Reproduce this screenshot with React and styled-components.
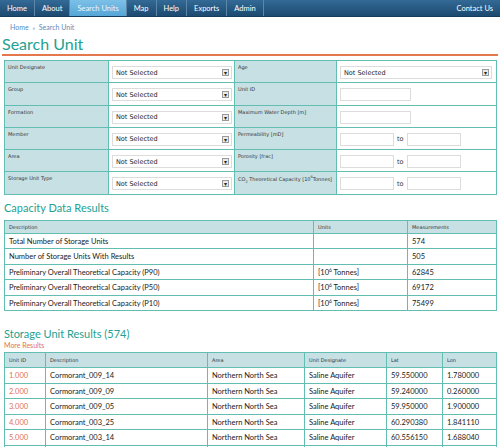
import React from 'react';
import styled, { createGlobalStyle } from 'styled-components';

const GlobalStyle = createGlobalStyle`
  body {
    margin: 0;
    background: #fff;
    font-family: Lato, "Open Sans", sans-serif;
  }
`;

const navItems = ['Home', 'About', 'Search Units', 'Map', 'Help', 'Exports', 'Admin'];

const leftFields = ['Unit Designate', 'Group', 'Formation', 'Member', 'Area', 'Storage Unit Type'];

const capacity = [
  ['Total Number of Storage Units', '', '574'],
  ['Number of Storage Units With Results', '', '505'],
  ['Preliminary Overall Theoretical Capacity (P90)', 't', '62845'],
  ['Preliminary Overall Theoretical Capacity (P50)', 't', '69172'],
  ['Preliminary Overall Theoretical Capacity (P10)', 't', '75499'],
];

const units = [
  ['1.000', 'Cormorant_009_14', '59.550000', '1.780000'],
  ['2.000', 'Cormorant_009_09', '59.240000', '0.260000'],
  ['3.000', 'Cormorant_009_05', '59.950000', '1.900000'],
  ['4.000', 'Cormorant_003_25', '60.290380', '1.841110'],
  ['5.000', 'Cormorant_003_14', '60.556150', '1.688040'],
  ['6.000', 'Cormorant_003_13', '60.412000', '1.622000'],
];

export default function App() {
  return (
    <>
      <GlobalStyle />
      <Nav>
        {navItems.map(item => (
          <NavItem key={item} active={item === 'Search Units'}>{item}</NavItem>
        ))}
        <NavRight>Contact Us</NavRight>
      </Nav>
      <Page>
        <Crumbs>Home <span>»</span> Search Unit</Crumbs>
        <Title>Search Unit</Title>
        <Rule />
        <FormTable>
          <colgroup>
            <col style={{ width: 104 }} />
            <col style={{ width: 126 }} />
            <col style={{ width: 102 }} />
            <col />
          </colgroup>
          <tbody>
            {leftFields.map((label, i) => (
              <tr key={label}>
                <LabelCell>{label}</LabelCell>
                <ValueCell>
                  <Select><span>Not Selected</span><Arrow>▾</Arrow></Select>
                </ValueCell>
                <LabelCell>{rightLabel(i)}</LabelCell>
                <ValueCell>{rightValue(i)}</ValueCell>
              </tr>
            ))}
          </tbody>
        </FormTable>

        <Heading>Capacity Data Results</Heading>
        <DataTable>
          <colgroup>
            <col style={{ width: 309 }} />
            <col style={{ width: 94 }} />
            <col />
          </colgroup>
          <thead>
            <tr>
              <Th>Description</Th>
              <Th>Units</Th>
              <Th>Measurements</Th>
            </tr>
          </thead>
          <tbody>
            {capacity.map(([d, u, m]) => (
              <tr key={d}>
                <Td>{d}</Td>
                <Td>{u && <>[10<sup>6</sup> Tonnes]</>}</Td>
                <Td>{m}</Td>
              </tr>
            ))}
          </tbody>
        </DataTable>

        <Heading second>Storage Unit Results (574)</Heading>
        <MoreLink>More Results</MoreLink>
        <DataTable>
          <colgroup>
            <col style={{ width: 41 }} />
            <col style={{ width: 162 }} />
            <col style={{ width: 97 }} />
            <col style={{ width: 82 }} />
            <col style={{ width: 56 }} />
            <col />
          </colgroup>
          <thead>
            <tr>
              <Th tall>Unit ID</Th>
              <Th tall>Description</Th>
              <Th tall>Area</Th>
              <Th tall>Unit Designate</Th>
              <Th tall>Lat</Th>
              <Th tall>Lon</Th>
            </tr>
          </thead>
          <tbody>
            {units.map(([id, d, lat, lon]) => (
              <tr key={id}>
                <Td id>{id}</Td>
                <Td>{d}</Td>
                <Td>Northern North Sea</Td>
                <Td>Saline Aquifer</Td>
                <Td>{lat}</Td>
                <Td>{lon}</Td>
              </tr>
            ))}
          </tbody>
        </DataTable>
      </Page>
    </>
  );
}

function rightLabel(i) {
  switch (i) {
    case 0: return 'Age';
    case 1: return 'Unit ID';
    case 2: return 'Maximum Water Depth [m]';
    case 3: return 'Permeability [mD]';
    case 4: return 'Porosity [frac]';
    default: return <>CO<sub>2</sub> Theoretical Capacity [10<sup>6</sup>Tonnes]</>;
  }
}

function rightValue(i) {
  if (i === 0) return <Select wide><span>Not Selected</span><Arrow>▾</Arrow></Select>;
  if (i < 3) return <Input />;
  return (
    <Range>
      <Input short />
      <span>to</span>
      <Input short />
    </Range>
  );
}

const Nav = styled.div`
  display: flex;
  align-items: stretch;
  height: 16px;
  background: linear-gradient(#336a96, #1c4a70);
  border-bottom: 1px solid #163c5c;
`;

const NavItem = styled.div`
  display: flex;
  align-items: center;
  padding: 0 7px;
  font-size: 7.5px;
  font-weight: 400;
  color: ${p => (p.active ? '#eef7fc' : '#ffffff')};
  background: ${p => (p.active ? 'linear-gradient(#7cc0e8, #55a6d6)' : 'transparent')};
  border-right: 1px solid #5d86a8;
`;

const NavRight = styled.div`
  margin-left: auto;
  display: flex;
  align-items: center;
  padding: 0 7px;
  font-size: 7.5px;
  font-weight: 400;
  color: #fff;
`;

const Page = styled.div`
  padding: 0 3px 0 4px;
`;

const Crumbs = styled.div`
  margin: 6px 0 0 6px;
  font-size: 7px;
  color: #5b8cbc;
  span {
    font-size: 6px;
    margin: 0 2px;
  }
`;

const Title = styled.h1`
  margin: 3px 0 0 -2px;
  font-size: 16px;
  font-weight: 400;
  color: #23a192;
  line-height: 19px;
`;

const Rule = styled.div`
  height: 2px;
  background: #e4774e;
  margin: 1px -1px 4px -2px;
`;

const FormTable = styled.table`
  width: 100%;
  border-collapse: collapse;
  table-layout: fixed;
  border: 1px solid #62bdb3;
`;

const LabelCell = styled.td`
  height: 18.3px;
  padding: 3px 3px 0;
  vertical-align: top;
  background: #c7e0e4;
  border: 1px solid #62bdb3;
  font-family: "DejaVu Sans", sans-serif;
  font-size: 5px;
  color: #333;
  white-space: nowrap;
  overflow: hidden;
  sub, sup { font-size: 3.5px; }
`;

const ValueCell = styled.td`
  padding: 5px 3px 0;
  vertical-align: top;
  border: 1px solid #62bdb3;
  background: #fff;
`;

const Select = styled.div`
  display: flex;
  align-items: center;
  justify-content: space-between;
  height: 13px;
  width: ${p => (p.wide ? '152px' : '120px')};
  box-sizing: border-box;
  padding: 0 2px 0 3px;
  border: 1px solid #dcdcdc;
  background: #fff;
  font-family: "DejaVu Sans", sans-serif;
  font-size: 6.5px;
  color: #222;
`;

const Arrow = styled.div`
  width: 7px;
  height: 7px;
  box-sizing: border-box;
  border: 1px solid #9a9a9a;
  background: #eaeaea;
  font-size: 6px;
  line-height: 5px;
  text-align: center;
  color: #222;
`;

const Input = styled.div`
  width: ${p => (p.short ? '54px' : '71px')};
  height: 13px;
  box-sizing: border-box;
  border: 1px solid #dcdcdc;
  background: #fff;
`;

const Range = styled.div`
  display: flex;
  align-items: center;
  gap: 3px;
  font-family: "DejaVu Sans", sans-serif;
  font-size: 6.5px;
  color: #333;
`;

const Heading = styled.h2`
  margin: ${p => (p.second ? '16px 0 0' : '6px 0 5px')};
  font-size: 11px;
  font-weight: 400;
  color: #23a192;
  line-height: 14px;
`;

const MoreLink = styled.div`
  font-size: 7px;
  color: #e07350;
  margin: 0 0 3px;
`;

const DataTable = styled.table`
  width: 100%;
  border-collapse: collapse;
  table-layout: fixed;
  border: 1px solid #62bdb3;
`;

const Th = styled.th`
  height: ${p => (p.tall ? '14px' : '12px')};
  padding: 0 4px;
  background: #c7e0e4;
  border: 1px solid #62bdb3;
  text-align: left;
  font-weight: 400;
  font-family: "DejaVu Sans", sans-serif;
  font-size: 5px;
  color: #333;
`;

const Td = styled.td`
  height: 14.5px;
  padding: 0 4px;
  border: 1px solid #62bdb3;
  font-size: 7.5px;
  color: ${p => (p.id ? '#e07350' : '#222')};
  white-space: nowrap;
  overflow: hidden;
  sup { font-size: 5px; line-height: 0; }
`;
